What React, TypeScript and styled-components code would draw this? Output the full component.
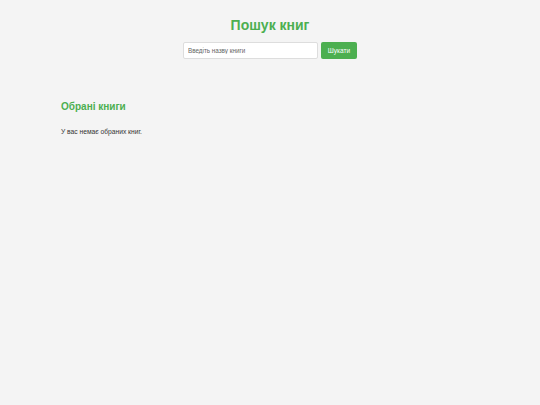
import styled, { createGlobalStyle } from "styled-components";

const GlobalStyle = createGlobalStyle`
  html, body {
    margin: 0;
    padding: 0;
    background-color: #f4f4f4;
    font-family: "Liberation Sans", Arial, sans-serif;
    color: #333;
  }
`;

const Page = styled.div`
  min-height: 405px;
  padding: 0 61px;
`;

const Header = styled.header`
  display: flex;
  flex-direction: column;
  align-items: center;
  padding-top: 16px;
`;

const Title = styled.h1`
  margin: 0;
  font-size: 14px;
  line-height: 18px;
  font-weight: bold;
  color: #4caf50;
`;

const SearchForm = styled.form`
  display: flex;
  gap: 3px;
  margin-top: 8px;
`;

const SearchInput = styled.input`
  box-sizing: border-box;
  width: 135px;
  height: 17px;
  padding: 0 4px;
  border: 1px solid #ddd;
  border-radius: 2px;
  background: #fff;
  font-family: "Liberation Sans", Arial, sans-serif;
  font-size: 6.3px;
  color: #333;
  outline: none;
  &::placeholder {
    color: #666;
  }
`;

const SearchButton = styled.button`
  box-sizing: border-box;
  width: 36px;
  height: 17px;
  padding: 0;
  border: none;
  border-radius: 2px;
  background-color: #4caf50;
  color: #fff;
  font-family: "Liberation Sans", Arial, sans-serif;
  font-size: 6.5px;
  cursor: pointer;
`;

const Favorites = styled.section`
  margin-top: 41px;
`;

const SectionTitle = styled.h2`
  margin: 0;
  font-size: 10px;
  line-height: 14px;
  font-weight: bold;
  color: #4caf50;
`;

const EmptyText = styled.p`
  margin: 14px 0 0;
  font-size: 6.7px;
  line-height: 8px;
  color: #333;
`;

export default function App() {
  return (
    <>
      <GlobalStyle />
      <Page>
        <Header>
          <Title>Пошук книг</Title>
          <SearchForm onSubmit={(e) => e.preventDefault()}>
            <SearchInput type="text" placeholder="Введіть назву книги" />
            <SearchButton type="submit">Шукати</SearchButton>
          </SearchForm>
        </Header>
        <Favorites>
          <SectionTitle>Обрані книги</SectionTitle>
          <EmptyText>У вас немає обраних книг.</EmptyText>
        </Favorites>
      </Page>
    </>
  );
}
